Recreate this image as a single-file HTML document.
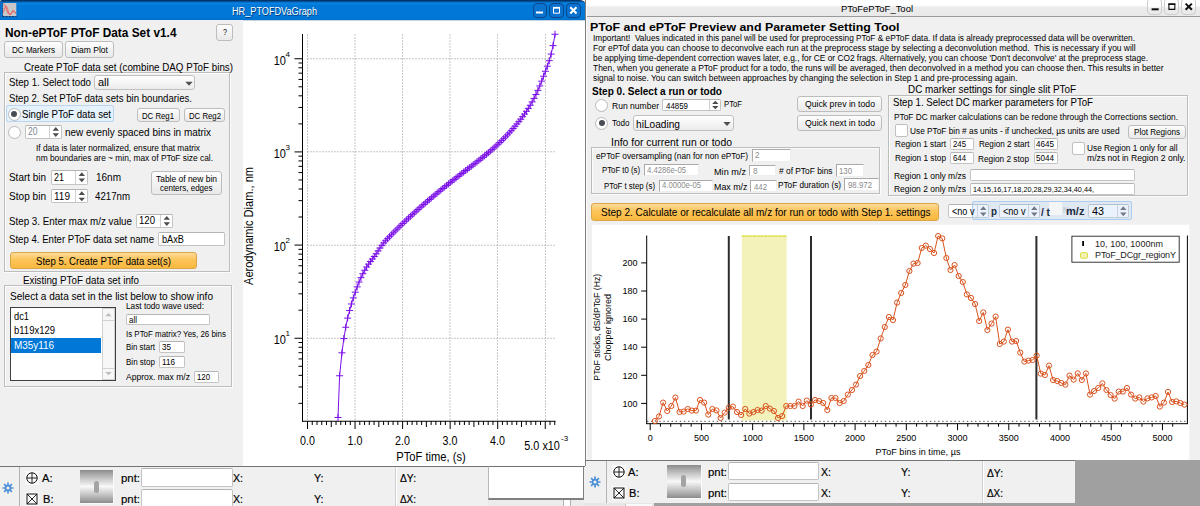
<!DOCTYPE html>
<html><head><meta charset="utf-8"><title>PToF</title><style>
html,body{margin:0;padding:0;background:#f0f0f0;}
body{width:1200px;height:506px;position:relative;overflow:hidden;font-family:"Liberation Sans",sans-serif;}
div,span.t,svg{position:absolute;}
span.t{white-space:pre;transform-origin:0 50%;display:block;}
</style></head>
<body>
<div style="left:0px;top:20px;width:240px;height:446px;background:#f0f0f0;"></div>
<div style="left:240px;top:20px;width:3px;height:446px;background:#f0f0f0;"></div>
<div style="left:243px;top:20px;width:342px;height:446px;background:#fff;"></div>
<div style="left:0px;top:0px;width:586px;height:20.3px;background:linear-gradient(#00417f 0,#0a84e6 2px,#0078d7 4.5px,#0078d7 16px,#0070cc 19px,#006ac2 20px);border-top:1px solid #00356c;border-radius:2px 6px 0 0;box-sizing:border-box;"></div>
<div style="left:0px;top:2px;width:1px;height:18px;background:#0a6cc8;"></div>
<svg style="left:2px;top:2px" width="16" height="16" viewBox="2 2 16 16"><rect x="2.9" y="3" width="13.4" height="13.2" fill="#c8c8c8"/><path d="M3.5 4 C5 4.6 5.6 6.5 6.5 9.5 S8.3 14.3 10 14.6 S12 11 12.9 10.6 S14.6 12.6 15.9 13.6" fill="none" stroke="#ee4a4a" stroke-width="0.9"/><path d="M3.4 12.5 C4.2 9 5 6.3 6.1 6.3 S8 10.2 8.8 12.5 S10.6 14.9 11.6 13 S12.9 10.8 13.6 11.1 S15 13.2 15.9 12.4" fill="none" stroke="#f05a5a" stroke-width="0.9"/><path d="M2.6 3 V16.4" stroke="#1a2a50" stroke-width="0.8" stroke-dasharray="1.2 1.2"/><path d="M2.4 16.6 H16.5" stroke="#102040" stroke-width="0.9" stroke-dasharray="2 1.2"/></svg>
<span class="t" style="transform:translateX(0.00px) scaleX(0.9140);left:231.8px;top:6px;font-size:10.01px;line-height:11px;color:#fff;text-shadow:0.7px 0.7px 0.5px rgba(0,30,80,0.7);">HR_PTOFDVaGraph</span>
<div style="left:532.5px;top:3px;width:14px;height:15px;border:1px solid #0a4a8c;border-radius:4px;background:#0c72cf;box-sizing:border-box;"></div>
<div style="left:549px;top:3px;width:14.5px;height:15px;border:1px solid #0a4a8c;border-radius:4px;background:#0c72cf;box-sizing:border-box;"></div>
<div style="left:566px;top:3px;width:14.5px;height:15px;border:1px solid #0a4a8c;border-radius:4px;background:#0c72cf;box-sizing:border-box;"></div>
<svg style="left:532px;top:3px" width="50" height="15"><path d="M4 9.5 H11" stroke="#fff" stroke-width="2"/><path d="M21 4.8 H28" stroke="#fff" stroke-width="1.8"/><path d="M21.5 5 V10.2 H27.5 V5" fill="none" stroke="#fff" stroke-width="1"/><path d="M38.3 4.3 L44.5 10.5 M44.5 4.3 L38.3 10.5" stroke="#fff" stroke-width="2"/></svg>
<span class="t" style="transform:translateX(0.00px) scaleX(0.9728);left:5.3px;top:26px;font-size:12.19px;line-height:14px;color:#000;font-weight:bold;">Non-ePToF PToF Data Set v1.4</span>
<div style="left:216px;top:24px;width:17px;height:17px;border:1px solid #bdbdbd;border-radius:3px;background:linear-gradient(#fdfdfd,#f3f3f3 50%,#e9e9e9);box-sizing:border-box;"></div>
<span class="t" style="transform:translateX(0.00px) scaleX(0.8797);left:222.5px;top:28px;font-size:8.19px;line-height:9px;color:#000;">?</span>
<div style="left:4px;top:41px;width:58.5px;height:16.5px;border:1px solid #bdbdbd;border-radius:3px;background:linear-gradient(#fdfdfd,#f3f3f3 50%,#e9e9e9);box-sizing:border-box;"></div>
<span class="t" style="transform:translateX(0.00px) scaleX(0.8613);left:11.75px;top:45px;font-size:9.37px;line-height:10px;color:#000;">DC Markers</span>
<div style="left:65px;top:41px;width:49px;height:16.5px;border:1px solid #bdbdbd;border-radius:3px;background:linear-gradient(#fdfdfd,#f3f3f3 50%,#e9e9e9);box-sizing:border-box;"></div>
<span class="t" style="transform:translateX(0.00px) scaleX(0.9118);left:71px;top:45px;font-size:9.37px;line-height:10px;color:#000;">Diam Plot</span>
<div style="left:4px;top:72px;width:226px;height:200px;border:1px solid #bdbdbd;box-sizing:border-box;box-shadow:inset 1px 1px 0 #fcfcfc, 1px 1px 0 #fcfcfc;"></div>
<span class="t" style="transform:translateX(0.00px) scaleX(0.9368);left:24px;top:62px;font-size:10.46px;line-height:11px;color:#000;">Create PToF data set (combine DAQ PToF bins)</span>
<span class="t" style="transform:translateX(0.00px) scaleX(0.9282);left:9px;top:77px;font-size:10.46px;line-height:11px;color:#000;">Step 1. Select todo</span>
<div style="left:94.3px;top:75px;width:101.2px;height:15.3px;border:1px solid #c0c0c0;border-radius:3px;background:linear-gradient(#ffffff,#f4f4f4 60%,#ebebeb);box-sizing:border-box;"></div>
<svg style="left:181.5px;top:75px" width="14" height="15.3"><path d="M3.3 6.85 L10.7 6.85 L7 10.85Z" fill="#505050"/></svg>
<span class="t" style="transform:translateX(0.00px) scaleX(1.0507);left:98px;top:77px;font-size:10.46px;line-height:11px;color:#000;">all</span>
<span class="t" style="transform:translateX(0.00px) scaleX(0.9208);left:9px;top:93px;font-size:10.46px;line-height:11px;color:#000;">Step 2. Set PToF data sets bin boundaries.</span>
<div style="left:6px;top:105.3px;width:107.5px;height:17px;border:1px solid #b8d6f3;background:#e5f1fb;box-sizing:border-box;border-radius:2px;"></div>
<div style="left:7.5px;top:107.5px;width:13px;height:13px;border:1px solid #bcbcbc;border-radius:50%;background:radial-gradient(circle at 50% 45%,#ffffff 55%,#ececec);box-sizing:border-box;"></div>
<div style="left:10.8px;top:110.8px;width:6.4px;height:6.4px;border-radius:50%;background:#474c55;"></div>
<span class="t" style="transform:translateX(0.00px) scaleX(0.9226);left:22px;top:109px;font-size:10.46px;line-height:11px;color:#000;">Single PToF data set</span>
<div style="left:137px;top:108.3px;width:42.5px;height:13.7px;border:1px solid #bdbdbd;border-radius:3px;background:linear-gradient(#fdfdfd,#f3f3f3 50%,#e9e9e9);box-sizing:border-box;"></div>
<span class="t" style="transform:translateX(0.00px) scaleX(0.8645);left:142.25px;top:111px;font-size:9.01px;line-height:10px;color:#000;">DC Reg1</span>
<div style="left:183.7px;top:108.3px;width:41.7px;height:13.7px;border:1px solid #bdbdbd;border-radius:3px;background:linear-gradient(#fdfdfd,#f3f3f3 50%,#e9e9e9);box-sizing:border-box;"></div>
<span class="t" style="transform:translateX(0.00px) scaleX(0.8645);left:188.55px;top:111px;font-size:9.01px;line-height:10px;color:#000;">DC Reg2</span>
<div style="left:7.5px;top:125.5px;width:13px;height:13px;border:1px solid #bcbcbc;border-radius:50%;background:radial-gradient(circle at 50% 45%,#ffffff 55%,#ececec);box-sizing:border-box;"></div>
<div style="left:24.5px;top:124.7px;width:37px;height:14px;border:1px solid #c4c4c4;border-top-color:#b4b4b4;border-radius:2px;background:#fff;box-sizing:border-box;"></div>
<div style="left:48.5px;top:125.7px;width:1px;height:12px;background:#d0d0d0;"></div>
<svg style="left:48.5px;top:124.7px" width="13" height="14"><path d="M3.6 5.7 L6.8 2 L10 5.7Z M3.6 8.3 L6.8 12 L10 8.3Z" fill="#4c4c4c"/></svg>
<span class="t" style="transform:translateX(0.00px) scaleX(0.8539);left:27.5px;top:126px;font-size:10.01px;line-height:11px;color:#7a8594;">20</span>
<span class="t" style="transform:translateX(0.00px) scaleX(0.9518);left:65px;top:127px;font-size:10.46px;line-height:11px;color:#000;">new evenly spaced bins in matrix</span>
<span class="t" style="transform:translateX(0.00px) scaleX(1.0171);left:36px;top:144px;font-size:8.19px;line-height:9px;color:#000;">If data is later normalized, ensure that matrix</span>
<span class="t" style="transform:translateX(0.00px) scaleX(1.0241);left:36px;top:154px;font-size:8.19px;line-height:9px;color:#000;">nm boundaries are ~ min, max of PToF size cal.</span>
<span class="t" style="transform:translateX(0.00px) scaleX(0.9502);left:9px;top:172px;font-size:10.46px;line-height:11px;color:#000;">Start bin</span>
<div style="left:50.5px;top:170px;width:37px;height:14.5px;border:1px solid #c4c4c4;border-top-color:#b4b4b4;border-radius:2px;background:#fff;box-sizing:border-box;"></div>
<div style="left:74.5px;top:171px;width:1px;height:12.5px;background:#d0d0d0;"></div>
<svg style="left:74.5px;top:170px" width="13" height="14.5"><path d="M3.6 5.95 L6.8 2.25 L10 5.95Z M3.6 8.55 L6.8 12.25 L10 8.55Z" fill="#4c4c4c"/></svg>
<span class="t" style="transform:translateX(0.00px) scaleX(0.8591);left:54px;top:172px;font-size:10.46px;line-height:11px;color:#000;">21</span>
<span class="t" style="transform:translateX(0.00px) scaleX(0.9558);left:96px;top:172px;font-size:10.46px;line-height:11px;color:#000;">16nm</span>
<span class="t" style="transform:translateX(0.00px) scaleX(0.9646);left:9px;top:191px;font-size:10.46px;line-height:11px;color:#000;">Stop bin</span>
<div style="left:50.5px;top:188.5px;width:37px;height:14.7px;border:1px solid #c4c4c4;border-top-color:#b4b4b4;border-radius:2px;background:#fff;box-sizing:border-box;"></div>
<div style="left:74.5px;top:189.5px;width:1px;height:12.7px;background:#d0d0d0;"></div>
<svg style="left:74.5px;top:188.5px" width="13" height="14.7"><path d="M3.6 6.05 L6.8 2.35 L10 6.05Z M3.6 8.65 L6.8 12.35 L10 8.65Z" fill="#4c4c4c"/></svg>
<span class="t" style="transform:translateX(0.00px) scaleX(0.9597);left:54px;top:191px;font-size:10.46px;line-height:11px;color:#000;">119</span>
<span class="t" style="transform:translateX(0.00px) scaleX(0.9264);left:95px;top:191px;font-size:10.46px;line-height:11px;color:#000;">4217nm</span>
<div style="left:150.5px;top:171px;width:71px;height:24px;border:1px solid #bdbdbd;border-radius:3px;background:linear-gradient(#fdfdfd,#f3f3f3 50%,#e9e9e9);box-sizing:border-box;"></div>
<span class="t" style="transform:translateX(0.00px) scaleX(0.9559);left:155.5px;top:174px;font-size:8.83px;line-height:10px;color:#000;">Table of new bin</span>
<span class="t" style="transform:translateX(0.00px) scaleX(0.9064);left:159.5px;top:183px;font-size:8.83px;line-height:10px;color:#000;">centers, edges</span>
<span class="t" style="transform:translateX(0.00px) scaleX(0.9367);left:9px;top:216px;font-size:10.46px;line-height:11px;color:#000;">Step 3. Enter max m/z value</span>
<div style="left:136.3px;top:213.6px;width:37px;height:14px;border:1px solid #c4c4c4;border-top-color:#b4b4b4;border-radius:2px;background:#fff;box-sizing:border-box;"></div>
<div style="left:160.3px;top:214.6px;width:1px;height:12px;background:#d0d0d0;"></div>
<svg style="left:160.3px;top:213.6px" width="13" height="14"><path d="M3.6 5.7 L6.8 2 L10 5.7Z M3.6 8.3 L6.8 12 L10 8.3Z" fill="#4c4c4c"/></svg>
<span class="t" style="transform:translateX(0.00px) scaleX(0.9167);left:139px;top:215px;font-size:10.46px;line-height:11px;color:#000;">120</span>
<span class="t" style="transform:translateX(0.00px) scaleX(0.9208);left:9px;top:234px;font-size:10.46px;line-height:11px;color:#000;">Step 4. Enter PToF data set name</span>
<div style="left:158.3px;top:232.3px;width:66.7px;height:13.7px;border:1px solid #c4c4c4;border-top-color:#b4b4b4;border-radius:2px;background:#fff;box-sizing:border-box;"></div>
<span class="t" style="transform:translateX(0.00px) scaleX(0.8800);left:161.5px;top:234px;font-size:10.46px;line-height:11px;color:#000;">bAxB</span>
<div style="left:10px;top:252.4px;width:187px;height:17px;border:1px solid #d9a648;border-radius:3px;background:linear-gradient(#fddb9a,#fcc458 45%,#f9b840);box-sizing:border-box;"></div>
<span class="t" style="transform:translateX(0.00px) scaleX(0.9184);left:36px;top:256px;font-size:10.46px;line-height:11px;color:#000;">Step 5. Create PToF data set(s)</span>
<div style="left:4px;top:285px;width:228px;height:101.5px;border:1px solid #bdbdbd;box-sizing:border-box;box-shadow:inset 1px 1px 0 #fcfcfc, 1px 1px 0 #fcfcfc;"></div>
<span class="t" style="transform:translateX(0.00px) scaleX(0.9373);left:23px;top:275px;font-size:10.46px;line-height:11px;color:#000;">Existing PToF data set info</span>
<span class="t" style="transform:translateX(0.00px) scaleX(0.9624);left:10px;top:291px;font-size:10.46px;line-height:11px;color:#000;">Select a data set in the list below to show info</span>
<div style="left:10px;top:307px;width:106px;height:74px;border:1px solid #404040;background:#fff;box-sizing:border-box;"></div>
<div style="left:11px;top:337.8px;width:90px;height:14.8px;background:#0078d7;"></div>
<span class="t" style="transform:translateX(0.00px) scaleX(0.8897);left:13.5px;top:311px;font-size:10.46px;line-height:11px;color:#000;">dc1</span>
<span class="t" style="transform:translateX(0.00px) scaleX(0.9080);left:13.5px;top:325px;font-size:10.46px;line-height:11px;color:#000;">b119x129</span>
<span class="t" style="transform:translateX(0.00px) scaleX(0.9471);left:13.5px;top:340px;font-size:10.46px;line-height:11px;color:#fff;">M35y116</span>
<div style="left:102px;top:308px;width:13px;height:72px;background:#f7f7f7;border:1px solid #d2d2d2;box-sizing:border-box;"></div>
<div style="left:102px;top:320px;width:13px;height:1px;background:#d2d2d2;"></div>
<div style="left:102px;top:367.5px;width:13px;height:1px;background:#d2d2d2;"></div>
<svg style="left:101px;top:308px" width="14" height="72"><path d="M4.2 8.3 L7.5 5 L10.8 8.3Z M4.2 64 L7.5 67.3 L10.8 64Z" fill="#bdbdbd"/></svg>
<span class="t" style="transform:translateX(0.00px) scaleX(1.0099);left:126px;top:302px;font-size:8.19px;line-height:9px;color:#000;">Last todo wave used:</span>
<div style="left:125.5px;top:313.5px;width:84.5px;height:11.5px;border:1px solid #c4c4c4;border-top-color:#b4b4b4;border-radius:2px;background:#fff;box-sizing:border-box;"></div>
<span class="t" style="transform:translateX(0.00px) scaleX(0.9771);left:129px;top:316px;font-size:8.19px;line-height:9px;color:#000;">all</span>
<span class="t" style="transform:translateX(0.00px) scaleX(0.9698);left:126px;top:330px;font-size:8.19px;line-height:9px;color:#000;">Is PToF matrix? Yes, 26 bins</span>
<span class="t" style="transform:translateX(0.00px) scaleX(0.9672);left:126px;top:343px;font-size:8.19px;line-height:9px;color:#000;">Bin start</span>
<div style="left:159px;top:340.5px;width:25.5px;height:12px;border:1px solid #c4c4c4;border-top-color:#b4b4b4;border-radius:2px;background:#fff;box-sizing:border-box;"></div>
<span class="t" style="transform:translateX(0.00px) scaleX(0.9897);left:162px;top:343px;font-size:8.19px;line-height:9px;color:#000;">35</span>
<span class="t" style="transform:translateX(0.00px) scaleX(0.9820);left:126px;top:358px;font-size:8.19px;line-height:9px;color:#000;">Bin stop</span>
<div style="left:159px;top:355.5px;width:25.5px;height:12px;border:1px solid #c4c4c4;border-top-color:#b4b4b4;border-radius:2px;background:#fff;box-sizing:border-box;"></div>
<span class="t" style="transform:translateX(0.00px) scaleX(0.9976);left:162px;top:358px;font-size:8.19px;line-height:9px;color:#000;">116</span>
<span class="t" style="transform:translateX(0.00px) scaleX(1.0438);left:126px;top:373px;font-size:8.19px;line-height:9px;color:#000;">Approx. max m/z</span>
<div style="left:194.2px;top:370.7px;width:24.8px;height:12px;border:1px solid #c4c4c4;border-top-color:#b4b4b4;border-radius:2px;background:#fff;box-sizing:border-box;"></div>
<span class="t" style="transform:translateX(0.00px) scaleX(0.9530);left:197px;top:373px;font-size:8.19px;line-height:9px;color:#000;">120</span>
<svg style="left:243px;top:20px" width="342" height="446" viewBox="243 20 342 446" font-family="Liberation Sans, sans-serif"><path d="M307.5 34.5 V421 M355 34.5 V421 M402.5 34.5 V421 M450 34.5 V421 M497.5 34.5 V421 M545.5 34.5 V421 M307.5 58.75 H555 M307.5 151.75 H555 M307.5 245.25 H555 M307.5 338.25 H555" stroke="#909090" stroke-width="1" stroke-dasharray="1 2" fill="none"/><path d="M302.5 34 V421.75 M302 421.25 H555.5 M307.50 421 V429 M312.25 421 V425 M317.01 421 V425 M321.76 421 V425 M326.52 421 V425 M331.27 421 V427 M336.03 421 V425 M340.78 421 V425 M345.54 421 V425 M350.30 421 V425 M355.05 421 V429 M359.81 421 V425 M364.56 421 V425 M369.31 421 V425 M374.07 421 V425 M378.82 421 V427 M383.58 421 V425 M388.33 421 V425 M393.09 421 V425 M397.85 421 V425 M402.60 421 V429 M407.36 421 V425 M412.11 421 V425 M416.87 421 V425 M421.62 421 V425 M426.38 421 V427 M431.13 421 V425 M435.88 421 V425 M440.64 421 V425 M445.39 421 V425 M450.15 421 V429 M454.90 421 V425 M459.66 421 V425 M464.41 421 V425 M469.17 421 V425 M473.92 421 V427 M478.68 421 V425 M483.44 421 V425 M488.19 421 V425 M492.94 421 V425 M497.70 421 V429 M502.45 421 V425 M507.21 421 V425 M511.97 421 V425 M516.72 421 V425 M521.48 421 V427 M526.23 421 V425 M530.99 421 V425 M535.74 421 V425 M540.50 421 V425 M545.25 421 V429 M550.00 421 V425 M554.76 421 V425 M298.5 403.37 H302.5 M298.5 386.97 H302.5 M298.5 375.33 H302.5 M298.5 366.30 H302.5 M298.5 358.92 H302.5 M298.5 352.68 H302.5 M298.5 347.28 H302.5 M298.5 342.51 H302.5 M294.5 338.25 H302.5 M298.5 310.20 H302.5 M298.5 293.80 H302.5 M298.5 282.16 H302.5 M298.5 273.13 H302.5 M298.5 265.75 H302.5 M298.5 259.51 H302.5 M298.5 254.11 H302.5 M298.5 249.34 H302.5 M294.5 245.08 H302.5 M298.5 217.03 H302.5 M298.5 200.63 H302.5 M298.5 188.99 H302.5 M298.5 179.96 H302.5 M298.5 172.58 H302.5 M298.5 166.34 H302.5 M298.5 160.94 H302.5 M298.5 156.17 H302.5 M294.5 151.91 H302.5 M298.5 123.86 H302.5 M298.5 107.46 H302.5 M298.5 95.82 H302.5 M298.5 86.79 H302.5 M298.5 79.41 H302.5 M298.5 73.17 H302.5 M298.5 67.77 H302.5 M298.5 63.00 H302.5 M294.5 58.74 H302.5" stroke="#000" stroke-width="1" fill="none"/><path d="M338.00 417.50 L339.60 375.75 L341.94 352.82 L343.84 338.61 L345.74 327.25 L347.65 318.11 L349.55 310.56 L351.45 303.97 L353.35 297.86 L355.25 292.16 L357.16 286.89 L359.06 282.05 L360.96 277.67 L362.86 273.74 L364.76 270.21 L366.67 267.03 L368.57 264.14 L370.47 261.47 L372.37 258.96 L374.27 256.51 L376.18 253.82 L378.08 250.90 L379.98 248.00 L381.88 245.35 L383.78 242.95 L385.69 240.74 L387.59 238.68 L389.49 236.70 L391.39 234.76 L393.29 232.83 L395.20 230.93 L397.10 229.05 L399.00 227.18 L400.90 225.34 L402.80 223.51 L404.71 221.69 L406.61 219.90 L408.51 218.12 L410.41 216.36 L412.31 214.61 L414.22 212.88 L416.12 211.17 L418.02 209.46 L419.92 207.78 L421.82 206.10 L423.73 204.44 L425.63 202.80 L427.53 201.16 L429.43 199.54 L431.33 197.93 L433.24 196.34 L435.14 194.75 L437.04 193.18 L438.94 191.61 L440.84 190.06 L442.75 188.51 L444.65 186.98 L446.55 185.45 L448.45 183.93 L450.35 182.42 L452.26 180.92 L454.16 179.43 L456.06 177.94 L457.96 176.46 L459.86 174.99 L461.77 173.52 L463.67 172.06 L465.57 170.60 L467.47 169.15 L469.37 167.70 L471.28 166.25 L473.18 164.79 L475.08 163.33 L476.98 161.86 L478.88 160.37 L480.79 158.87 L482.69 157.36 L484.59 155.82 L486.49 154.26 L488.39 152.68 L490.30 151.06 L492.20 149.42 L494.10 147.74 L496.00 146.03 L497.90 144.27 L499.81 142.48 L501.71 140.64 L503.61 138.75 L505.51 136.82 L507.41 134.83 L509.32 132.78 L511.22 130.68 L513.12 128.51 L515.02 126.29 L516.92 123.99 L518.83 121.63 L520.73 119.20 L522.63 116.68 L524.53 114.05 L526.43 111.29 L528.34 108.36 L530.24 105.25 L532.14 101.92 L534.04 98.35 L535.94 94.52 L537.85 90.39 L539.75 85.94 L541.65 81.15 L543.55 76.21 L545.45 71.29 L547.36 66.21 L549.26 60.69 L551.16 54.08 L553.06 45.61 L555.00 34.25" stroke="#7a10e8" stroke-width="1" fill="none"/><path d="M334.50 417.50 h7 M338.00 414.00 v7 M336.10 375.75 h7 M339.60 372.25 v7 M338.44 352.82 h7 M341.94 349.32 v7 M340.34 338.61 h7 M343.84 335.11 v7 M342.24 327.25 h7 M345.74 323.75 v7 M344.15 318.11 h7 M347.65 314.61 v7 M346.05 310.56 h7 M349.55 307.06 v7 M347.95 303.97 h7 M351.45 300.47 v7 M349.85 297.86 h7 M353.35 294.36 v7 M351.75 292.16 h7 M355.25 288.66 v7 M353.66 286.89 h7 M357.16 283.39 v7 M355.56 282.05 h7 M359.06 278.55 v7 M357.46 277.67 h7 M360.96 274.17 v7 M359.36 273.74 h7 M362.86 270.24 v7 M361.26 270.21 h7 M364.76 266.71 v7 M363.17 267.03 h7 M366.67 263.53 v7 M365.07 264.14 h7 M368.57 260.64 v7 M366.97 261.47 h7 M370.47 257.97 v7 M368.87 258.96 h7 M372.37 255.46 v7 M370.77 256.51 h7 M374.27 253.01 v7 M372.68 253.82 h7 M376.18 250.32 v7 M374.58 250.90 h7 M378.08 247.40 v7 M376.48 248.00 h7 M379.98 244.50 v7 M378.38 245.35 h7 M381.88 241.85 v7 M380.28 242.95 h7 M383.78 239.45 v7 M382.19 240.74 h7 M385.69 237.24 v7 M384.09 238.68 h7 M387.59 235.18 v7 M385.99 236.70 h7 M389.49 233.20 v7 M387.89 234.76 h7 M391.39 231.26 v7 M389.79 232.83 h7 M393.29 229.33 v7 M391.70 230.93 h7 M395.20 227.43 v7 M393.60 229.05 h7 M397.10 225.55 v7 M395.50 227.18 h7 M399.00 223.68 v7 M397.40 225.34 h7 M400.90 221.84 v7 M399.30 223.51 h7 M402.80 220.01 v7 M401.21 221.69 h7 M404.71 218.19 v7 M403.11 219.90 h7 M406.61 216.40 v7 M405.01 218.12 h7 M408.51 214.62 v7 M406.91 216.36 h7 M410.41 212.86 v7 M408.81 214.61 h7 M412.31 211.11 v7 M410.72 212.88 h7 M414.22 209.38 v7 M412.62 211.17 h7 M416.12 207.67 v7 M414.52 209.46 h7 M418.02 205.96 v7 M416.42 207.78 h7 M419.92 204.28 v7 M418.32 206.10 h7 M421.82 202.60 v7 M420.23 204.44 h7 M423.73 200.94 v7 M422.13 202.80 h7 M425.63 199.30 v7 M424.03 201.16 h7 M427.53 197.66 v7 M425.93 199.54 h7 M429.43 196.04 v7 M427.83 197.93 h7 M431.33 194.43 v7 M429.74 196.34 h7 M433.24 192.84 v7 M431.64 194.75 h7 M435.14 191.25 v7 M433.54 193.18 h7 M437.04 189.68 v7 M435.44 191.61 h7 M438.94 188.11 v7 M437.34 190.06 h7 M440.84 186.56 v7 M439.25 188.51 h7 M442.75 185.01 v7 M441.15 186.98 h7 M444.65 183.48 v7 M443.05 185.45 h7 M446.55 181.95 v7 M444.95 183.93 h7 M448.45 180.43 v7 M446.85 182.42 h7 M450.35 178.92 v7 M448.76 180.92 h7 M452.26 177.42 v7 M450.66 179.43 h7 M454.16 175.93 v7 M452.56 177.94 h7 M456.06 174.44 v7 M454.46 176.46 h7 M457.96 172.96 v7 M456.36 174.99 h7 M459.86 171.49 v7 M458.27 173.52 h7 M461.77 170.02 v7 M460.17 172.06 h7 M463.67 168.56 v7 M462.07 170.60 h7 M465.57 167.10 v7 M463.97 169.15 h7 M467.47 165.65 v7 M465.87 167.70 h7 M469.37 164.20 v7 M467.78 166.25 h7 M471.28 162.75 v7 M469.68 164.79 h7 M473.18 161.29 v7 M471.58 163.33 h7 M475.08 159.83 v7 M473.48 161.86 h7 M476.98 158.36 v7 M475.38 160.37 h7 M478.88 156.87 v7 M477.29 158.87 h7 M480.79 155.37 v7 M479.19 157.36 h7 M482.69 153.86 v7 M481.09 155.82 h7 M484.59 152.32 v7 M482.99 154.26 h7 M486.49 150.76 v7 M484.89 152.68 h7 M488.39 149.18 v7 M486.80 151.06 h7 M490.30 147.56 v7 M488.70 149.42 h7 M492.20 145.92 v7 M490.60 147.74 h7 M494.10 144.24 v7 M492.50 146.03 h7 M496.00 142.53 v7 M494.40 144.27 h7 M497.90 140.77 v7 M496.31 142.48 h7 M499.81 138.98 v7 M498.21 140.64 h7 M501.71 137.14 v7 M500.11 138.75 h7 M503.61 135.25 v7 M502.01 136.82 h7 M505.51 133.32 v7 M503.91 134.83 h7 M507.41 131.33 v7 M505.82 132.78 h7 M509.32 129.28 v7 M507.72 130.68 h7 M511.22 127.18 v7 M509.62 128.51 h7 M513.12 125.01 v7 M511.52 126.29 h7 M515.02 122.79 v7 M513.42 123.99 h7 M516.92 120.49 v7 M515.33 121.63 h7 M518.83 118.13 v7 M517.23 119.20 h7 M520.73 115.70 v7 M519.13 116.68 h7 M522.63 113.18 v7 M521.03 114.05 h7 M524.53 110.55 v7 M522.93 111.29 h7 M526.43 107.79 v7 M524.84 108.36 h7 M528.34 104.86 v7 M526.74 105.25 h7 M530.24 101.75 v7 M528.64 101.92 h7 M532.14 98.42 v7 M530.54 98.35 h7 M534.04 94.85 v7 M532.44 94.52 h7 M535.94 91.02 v7 M534.35 90.39 h7 M537.85 86.89 v7 M536.25 85.94 h7 M539.75 82.44 v7 M538.15 81.15 h7 M541.65 77.65 v7 M540.05 76.21 h7 M543.55 72.71 v7 M541.95 71.29 h7 M545.45 67.79 v7 M543.86 66.21 h7 M547.36 62.71 v7 M545.76 60.69 h7 M549.26 57.19 v7 M547.66 54.08 h7 M551.16 50.58 v7 M549.56 45.61 h7 M553.06 42.11 v7 M551.50 34.25 h7 M555.00 30.75 v7" stroke="#7a10e8" stroke-width="1" fill="none"/><text x="307.5" y="444.6" font-size="12" text-anchor="middle" textLength="14.9" lengthAdjust="spacingAndGlyphs">0.0</text><text x="355" y="444.6" font-size="12" text-anchor="middle" textLength="14.9" lengthAdjust="spacingAndGlyphs">1.0</text><text x="402.5" y="444.6" font-size="12" text-anchor="middle" textLength="14.9" lengthAdjust="spacingAndGlyphs">2.0</text><text x="450" y="444.6" font-size="12" text-anchor="middle" textLength="14.9" lengthAdjust="spacingAndGlyphs">3.0</text><text x="497.5" y="444.6" font-size="12" text-anchor="middle" textLength="14.9" lengthAdjust="spacingAndGlyphs">4.0</text><text x="524.3" y="449.6" font-size="12" textLength="35.6" lengthAdjust="spacingAndGlyphs">5.0 x10</text><text x="561" y="440.6" font-size="8">-3</text><text x="396.3" y="461" font-size="12" textLength="69.5" lengthAdjust="spacingAndGlyphs">PToF time, (s)</text><text x="273.7" y="64.85" font-size="12" textLength="12.2" lengthAdjust="spacingAndGlyphs">10</text><text x="285.5" y="56.55" font-size="8">4</text><text x="273.7" y="157.85" font-size="12" textLength="12.2" lengthAdjust="spacingAndGlyphs">10</text><text x="285.5" y="149.55" font-size="8">3</text><text x="273.7" y="251.35" font-size="12" textLength="12.2" lengthAdjust="spacingAndGlyphs">10</text><text x="285.5" y="243.05" font-size="8">2</text><text x="273.7" y="344.35" font-size="12" textLength="12.2" lengthAdjust="spacingAndGlyphs">10</text><text x="285.5" y="336.05" font-size="8">1</text><text transform="translate(252.8 285) rotate(-90)" font-size="12" textLength="118" lengthAdjust="spacingAndGlyphs">Aerodynamic Diam., nm</text></svg>
<div style="left:0px;top:465.5px;width:585px;height:40.5px;background:#f0f0f0;border-top:1px solid #747474;box-sizing:border-box;"></div>
<svg style="left:2.2px;top:481.7px" width="12" height="12" viewBox="-6 -6 12 12"><g stroke="#4a8fd6" stroke-width="1.7"><path d="M0 -5.5 V5.5 M-5.5 0 H5.5 M-3.9 -3.9 L3.9 3.9 M-3.9 3.9 L3.9 -3.9"/></g><circle r="3.2" fill="#4a8fd6"/><circle r="1.6" fill="#f0f0f0"/></svg>
<div style="left:19px;top:466.5px;width:1px;height:39.5px;background:#b4b4b4;"></div>
<svg style="left:24.5px;top:470.5px" width="14" height="14"><rect width="14" height="14" fill="#fafafa"/><circle cx="7" cy="7" r="5.2" fill="none" stroke="#111" stroke-width="1"/><path d="M7 1.8 V12.2 M1.8 7 H12.2" stroke="#111" stroke-width="0.9"/></svg>
<svg style="left:24.5px;top:491.5px" width="14" height="14"><rect width="14" height="14" fill="#fafafa"/><rect x="2" y="2" width="10" height="10" fill="none" stroke="#111" stroke-width="1"/><path d="M2 2 L12 12 M12 2 L2 12" stroke="#111" stroke-width="0.9"/></svg>
<span class="t" style="transform:translateX(0.00px) scaleX(1.0718);left:42px;top:473px;font-size:10.37px;line-height:11px;color:#000;-webkit-text-stroke:0.18px #000;">A:</span>
<span class="t" style="transform:translateX(0.00px) scaleX(1.0718);left:42.5px;top:494px;font-size:10.37px;line-height:11px;color:#000;-webkit-text-stroke:0.18px #000;">B:</span>
<div style="left:79.8px;top:470.2px;width:33.5px;height:33px;background:linear-gradient(#8c8c8c,#c4c4c4 25%,#f8f8f8 50%,#c4c4c4 75%,#8c8c8c);box-shadow:1px 1px 0 #fafafa;"></div>
<div style="left:94.1px;top:480.8px;width:5px;height:12px;background:#a4a4a4;border-radius:2.5px;"></div>
<span class="t" style="transform:translateX(0.00px) scaleX(1.0995);left:121px;top:473px;font-size:10.37px;line-height:11px;color:#000;-webkit-text-stroke:0.15px #000;">pnt:</span>
<span class="t" style="transform:translateX(0.00px) scaleX(1.0995);left:121px;top:494px;font-size:10.37px;line-height:11px;color:#000;-webkit-text-stroke:0.15px #000;">pnt:</span>
<div style="left:141px;top:468px;width:92px;height:18.5px;border:1px solid #c4c4c4;border-top-color:#b4b4b4;border-radius:2px;background:#fff;box-sizing:border-box;"></div>
<div style="left:141px;top:489px;width:92px;height:18.5px;border:1px solid #c4c4c4;border-top-color:#b4b4b4;border-radius:2px;background:#fff;box-sizing:border-box;"></div>
<span class="t" style="transform:translateX(0.00px) scaleX(1.0207);left:233px;top:473px;font-size:10.37px;line-height:11px;color:#000;-webkit-text-stroke:0.18px #000;">X:</span>
<span class="t" style="transform:translateX(0.00px) scaleX(1.0305);left:313.5px;top:473px;font-size:10.37px;line-height:11px;color:#000;-webkit-text-stroke:0.18px #000;">Y:</span>
<span class="t" style="transform:translateX(0.00px) scaleX(1.0207);left:233px;top:494px;font-size:10.37px;line-height:11px;color:#000;-webkit-text-stroke:0.18px #000;">X:</span>
<span class="t" style="transform:translateX(0.00px) scaleX(1.0305);left:313.5px;top:494px;font-size:10.37px;line-height:11px;color:#000;-webkit-text-stroke:0.18px #000;">Y:</span>
<div style="left:395px;top:466.5px;width:1px;height:39.5px;background:#d0d0d0;"></div>
<div style="left:396px;top:466.5px;width:1px;height:39.5px;background:#fff;"></div>
<span class="t" style="transform:translateX(0.00px) scaleX(0.9913);left:399.5px;top:473px;font-size:10.37px;line-height:11px;color:#000;-webkit-text-stroke:0.18px #000;">ΔY:</span>
<span class="t" style="transform:translateX(0.00px) scaleX(0.9570);left:399.5px;top:494px;font-size:10.37px;line-height:11px;color:#000;-webkit-text-stroke:0.18px #000;">ΔX:</span>
<div style="left:488px;top:465.5px;width:96.3px;height:34px;background:#fff;border-top:1px solid #707070;border-bottom:2px solid #808080;border-left:1px solid #b8b8b8;border-right:1px solid #808080;box-sizing:border-box;"></div>
<div style="left:488px;top:499.5px;width:96px;height:7px;background:#ececec;"></div>
<div style="left:562.5px;top:499.5px;width:8px;height:7px;background:#fff;border-left:1px solid #b0b0b0;border-right:1px solid #b0b0b0;box-sizing:border-box;"></div>
<div style="left:243px;top:20px;width:342px;height:1px;background:#c4d6e6;"></div>
<div style="left:585px;top:0px;width:615px;height:506px;background:#f0f0f0;"></div>
<div style="left:585px;top:0px;width:615px;height:17px;background:linear-gradient(#ffffff 0,#ffffff 5px,#ebebeb 7.5px,#e9e9e9 100%);border-bottom:1px solid #9a9a9a;box-sizing:border-box;"></div>
<div style="left:585px;top:0px;width:1px;height:466px;background:#808080;"></div>
<div style="left:586px;top:0px;width:1px;height:460px;background:#fbfbfb;"></div>
<span class="t" style="transform:translateX(0.00px) scaleX(0.9903);left:841px;top:3px;font-size:9.55px;line-height:11px;color:#000;">PToFePToF_Tool</span>
<div style="left:1147.3px;top:-2px;width:15px;height:16.6px;border:1px solid #cdcdcd;border-radius:4px;background:linear-gradient(#fff 0,#fff 7px,#ececec 9.5px,#e9e9e9 100%);box-sizing:border-box;"></div>
<div style="left:1164.3px;top:-2px;width:15px;height:16.6px;border:1px solid #cdcdcd;border-radius:4px;background:linear-gradient(#fff 0,#fff 7px,#ececec 9.5px,#e9e9e9 100%);box-sizing:border-box;"></div>
<div style="left:1181.3px;top:-2px;width:15px;height:16.6px;border:1px solid #cdcdcd;border-radius:4px;background:linear-gradient(#fff 0,#fff 7px,#ececec 9.5px,#e9e9e9 100%);box-sizing:border-box;"></div>
<svg style="left:1147px;top:0px" width="53" height="16" viewBox="1147 0 53 16"><path d="M1151.6 9.3 H1158.7" stroke="#111" stroke-width="2"/><path d="M1168.3 4.1 H1175.4" stroke="#111" stroke-width="1.8"/><path d="M1168.9 4 V9.4 H1174.8 V4" fill="none" stroke="#111" stroke-width="1.1"/><path d="M1185.6 3.6 L1191.9 9.8 M1191.9 3.6 L1185.6 9.8" stroke="#111" stroke-width="2"/></svg>
<span class="t" style="transform:translateX(0.00px) scaleX(1.1349);left:590.3px;top:21px;font-size:10.92px;line-height:12px;color:#000;font-weight:bold;">PToF and ePToF Preview and Parameter Setting Tool</span>
<span class="t" style="transform:translateX(0.00px) scaleX(1.0149);left:592.5px;top:34px;font-size:8.19px;line-height:9px;color:#000;">Important!  Values indicated in this panel will be used for preprocessing PToF &amp; ePToF data. If data is already preprocessed data will be overwritten.</span>
<span class="t" style="transform:translateX(0.00px) scaleX(1.0290);left:592.5px;top:44px;font-size:8.19px;line-height:9px;color:#000;">For ePTof data you can choose to deconvolve each run at the preprocess stage by selecting a deconvolution method.  This is necessary if you will</span>
<span class="t" style="transform:translateX(0.00px) scaleX(1.0190);left:592.5px;top:54px;font-size:8.19px;line-height:9px;color:#000;">be applying time-dependent correction waves later, e.g., for CE or CO2 frags. Alternatively, you can choose 'Don't deconvolve' at the preprocess stage.</span>
<span class="t" style="transform:translateX(0.00px) scaleX(1.0339);left:592.5px;top:64px;font-size:8.19px;line-height:9px;color:#000;">Then, when you generate a PToF product for a todo, the runs will be averaged, then deconvolved in a method you can choose then. This results in better</span>
<span class="t" style="transform:translateX(0.00px) scaleX(1.0234);left:592.5px;top:74px;font-size:8.19px;line-height:9px;color:#000;">signal to noise. You can switch between approaches by changing the selection in Step 1 and pre-processing again.</span>
<span class="t" style="transform:translateX(0.00px) scaleX(0.9207);left:591.5px;top:85px;font-size:10.92px;line-height:12px;color:#000;font-weight:bold;">Step 0. Select a run or todo</span>
<div style="left:595.3px;top:98.8px;width:13px;height:13px;border:1px solid #bcbcbc;border-radius:50%;background:radial-gradient(circle at 50% 45%,#ffffff 55%,#ececec);box-sizing:border-box;"></div>
<span class="t" style="transform:translateX(0.00px) scaleX(0.9391);left:612px;top:101px;font-size:9.1px;line-height:10px;color:#000;">Run number</span>
<div style="left:662.3px;top:98.6px;width:59px;height:12px;border:1px solid #c4c4c4;border-top-color:#b4b4b4;border-radius:2px;background:#fff;box-sizing:border-box;"></div>
<div style="left:709.3px;top:99.6px;width:1px;height:10px;background:#d0d0d0;"></div>
<svg style="left:709.3px;top:98.6px" width="12" height="12"><path d="M3.1 5.1 L6.3 1.8 L9.5 5.1Z M3.1 6.9 L6.3 10.2 L9.5 6.9Z" fill="#4c4c4c"/></svg>
<span class="t" style="transform:translateX(0.00px) scaleX(0.9677);left:666px;top:102px;font-size:8.19px;line-height:9px;color:#000;">44859</span>
<span class="t" style="transform:translateX(0.00px) scaleX(0.8477);left:723.5px;top:99px;font-size:9.1px;line-height:10px;color:#000;">PToF</span>
<div style="left:797px;top:96.3px;width:85px;height:16.2px;border:1px solid #bdbdbd;border-radius:3px;background:linear-gradient(#fdfdfd,#f3f3f3 50%,#e9e9e9);box-sizing:border-box;"></div>
<span class="t" style="transform:translateX(0.00px) scaleX(0.9550);left:804.5px;top:99px;font-size:9.1px;line-height:10px;color:#000;">Quick prev in todo</span>
<div style="left:797px;top:115px;width:85px;height:16.3px;border:1px solid #bdbdbd;border-radius:3px;background:linear-gradient(#fdfdfd,#f3f3f3 50%,#e9e9e9);box-sizing:border-box;"></div>
<span class="t" style="transform:translateX(0.00px) scaleX(0.9616);left:804.5px;top:118px;font-size:9.1px;line-height:10px;color:#000;">Quick next in todo</span>
<div style="left:595.3px;top:116.5px;width:13px;height:13px;border:1px solid #bcbcbc;border-radius:50%;background:radial-gradient(circle at 50% 45%,#ffffff 55%,#ececec);box-sizing:border-box;"></div>
<div style="left:598.6px;top:119.8px;width:6.4px;height:6.4px;border-radius:50%;background:#474c55;"></div>
<span class="t" style="transform:translateX(0.00px) scaleX(0.8875);left:612px;top:118px;font-size:9.1px;line-height:10px;color:#000;">Todo</span>
<div style="left:632.5px;top:115.2px;width:101.5px;height:15.8px;border:1px solid #c0c0c0;border-radius:3px;background:linear-gradient(#ffffff,#f4f4f4 60%,#ebebeb);box-sizing:border-box;"></div>
<svg style="left:720px;top:115.2px" width="14" height="15.8"><path d="M3.3 7.1 L10.7 7.1 L7 11.1Z" fill="#505050"/></svg>
<span class="t" style="transform:translateX(0.00px) scaleX(0.9300);left:636px;top:118px;font-size:10.92px;line-height:12px;color:#000;">hiLoading</span>
<div style="left:591px;top:147px;width:289px;height:47px;border:1px solid #bdbdbd;box-sizing:border-box;box-shadow:inset 1px 1px 0 #fcfcfc, 1px 1px 0 #fcfcfc;"></div>
<span class="t" style="transform:translateX(0.00px) scaleX(0.9964);left:610.5px;top:137px;font-size:10.46px;line-height:11px;color:#000;">Info for current run or todo</span>
<span class="t" style="transform:translateX(0.00px) scaleX(1.0171);left:596px;top:152px;font-size:8.19px;line-height:9px;color:#000;">ePToF oversampling (nan for non ePToF)</span>
<div style="left:751.5px;top:148.5px;width:39.5px;height:13px;border:1px solid #c4c4c4;border-top-color:#b4b4b4;border-radius:2px;background:#fff;box-sizing:border-box;border-color:#aaa #eee #eee #aaa;border-radius:0;"></div>
<span class="t" style="transform:translateX(0.00px) scaleX(0.9897);left:755px;top:151px;font-size:8.19px;line-height:9px;color:#8a8a8a;">2</span>
<span class="t" style="transform:translateX(0.00px) scaleX(0.9507);left:602px;top:166px;font-size:8.19px;line-height:9px;color:#000;">PToF t0 (s)</span>
<div style="left:644px;top:164px;width:54.5px;height:11.5px;border:1px solid #c4c4c4;border-top-color:#b4b4b4;border-radius:2px;background:#fff;box-sizing:border-box;border-color:#aaa #eee #eee #aaa;border-radius:0;"></div>
<span class="t" style="transform:translateX(0.00px) scaleX(0.9430);left:647px;top:166px;font-size:8.19px;line-height:9px;color:#8a8a8a;">4.4286e-05</span>
<span class="t" style="transform:translateX(0.00px) scaleX(1.0600);left:713.5px;top:167px;font-size:8.64px;line-height:10px;color:#000;">Min m/z</span>
<div style="left:749px;top:164.5px;width:27.3px;height:11.8px;border:1px solid #c4c4c4;border-top-color:#b4b4b4;border-radius:2px;background:#fff;box-sizing:border-box;border-color:#aaa #eee #eee #aaa;border-radius:0;"></div>
<span class="t" style="transform:translateX(0.00px) scaleX(0.9897);left:752.5px;top:167px;font-size:8.19px;line-height:9px;color:#8a8a8a;">8</span>
<span class="t" style="transform:translateX(0.00px) scaleX(1.0239);left:779px;top:167px;font-size:8.19px;line-height:9px;color:#000;"># of PToF bins</span>
<div style="left:836px;top:164px;width:27.7px;height:12.5px;border:1px solid #c4c4c4;border-top-color:#b4b4b4;border-radius:2px;background:#fff;box-sizing:border-box;border-color:#aaa #eee #eee #aaa;border-radius:0;"></div>
<span class="t" style="transform:translateX(0.00px) scaleX(0.9530);left:839px;top:167px;font-size:8.19px;line-height:9px;color:#8a8a8a;">130</span>
<span class="t" style="transform:translateX(0.00px) scaleX(0.9597);left:603.5px;top:182px;font-size:8.19px;line-height:9px;color:#000;">PToF t step (s)</span>
<div style="left:658.5px;top:180px;width:54px;height:11.5px;border:1px solid #c4c4c4;border-top-color:#b4b4b4;border-radius:2px;background:#fff;box-sizing:border-box;border-color:#aaa #eee #eee #aaa;border-radius:0;"></div>
<span class="t" style="transform:translateX(0.00px) scaleX(0.9430);left:661.5px;top:181px;font-size:8.19px;line-height:9px;color:#8a8a8a;">4.0000e-05</span>
<span class="t" style="transform:translateX(0.00px) scaleX(1.0278);left:713.5px;top:182px;font-size:8.64px;line-height:10px;color:#000;">Max m/z</span>
<div style="left:750.3px;top:179.8px;width:26.7px;height:12px;border:1px solid #c4c4c4;border-top-color:#b4b4b4;border-radius:2px;background:#fff;box-sizing:border-box;border-color:#aaa #eee #eee #aaa;border-radius:0;"></div>
<span class="t" style="transform:translateX(0.00px) scaleX(0.9530);left:753.5px;top:183px;font-size:8.19px;line-height:9px;color:#8a8a8a;">442</span>
<span class="t" style="transform:translateX(0.00px) scaleX(1.0050);left:777.5px;top:181px;font-size:8.19px;line-height:9px;color:#000;">PToF duration (s)</span>
<div style="left:844.1px;top:178px;width:35.2px;height:13px;border:1px solid #c4c4c4;border-top-color:#b4b4b4;border-radius:2px;background:#fff;box-sizing:border-box;border-color:#aaa #eee #eee #aaa;border-radius:0;"></div>
<span class="t" style="transform:translateX(0.00px) scaleX(0.9600);left:847.5px;top:181px;font-size:8.19px;line-height:9px;color:#8a8a8a;">98.972</span>
<div style="left:888px;top:94.5px;width:300px;height:101px;border:1px solid #bdbdbd;box-sizing:border-box;box-shadow:inset 1px 1px 0 #fcfcfc, 1px 1px 0 #fcfcfc;"></div>
<span class="t" style="transform:translateX(0.00px) scaleX(0.9451);left:907.5px;top:84px;font-size:10.46px;line-height:11px;color:#000;">DC marker settings for single slit PToF</span>
<span class="t" style="transform:translateX(0.00px) scaleX(0.9230);left:892.5px;top:97px;font-size:10.46px;line-height:11px;color:#000;">Step 1. Select DC marker parameters for PToF</span>
<span class="t" style="transform:translateX(0.00px) scaleX(1.0200);left:893.5px;top:113px;font-size:8.19px;line-height:9px;color:#000;">PToF DC marker calculations can be redone through the Corrections section.</span>
<div style="left:894.8px;top:124px;width:12.8px;height:12.8px;border:1px solid #c0c0c0;border-radius:2px;background:#fff;box-sizing:border-box;"></div>
<span class="t" style="transform:translateX(0.00px) scaleX(1.0151);left:909.5px;top:127px;font-size:8.19px;line-height:9px;color:#000;">Use PToF bin # as units - if unchecked, µs units are used</span>
<div style="left:1127.5px;top:124.6px;width:58.5px;height:14px;border:1px solid #bdbdbd;border-radius:3px;background:linear-gradient(#fdfdfd,#f3f3f3 50%,#e9e9e9);box-sizing:border-box;"></div>
<span class="t" style="transform:translateX(0.00px) scaleX(0.9189);left:1133.75px;top:127px;font-size:8.83px;line-height:10px;color:#000;">Plot Regions</span>
<span class="t" style="transform:translateX(0.00px) scaleX(1.0025);left:894.5px;top:140px;font-size:8.19px;line-height:9px;color:#000;">Region 1 start</span>
<div style="left:949.5px;top:138.4px;width:24.5px;height:11.8px;border:1px solid #c4c4c4;border-top-color:#b4b4b4;border-radius:2px;background:#fff;box-sizing:border-box;"></div>
<span class="t" style="transform:translateX(0.00px) scaleX(0.9530);left:952.5px;top:140px;font-size:8.19px;line-height:9px;color:#000;">245</span>
<span class="t" style="transform:translateX(0.00px) scaleX(0.9926);left:979px;top:140px;font-size:8.19px;line-height:9px;color:#000;">Region 2 start</span>
<div style="left:1033.5px;top:138.4px;width:24.5px;height:11.8px;border:1px solid #c4c4c4;border-top-color:#b4b4b4;border-radius:2px;background:#fff;box-sizing:border-box;"></div>
<span class="t" style="transform:translateX(0.00px) scaleX(0.9897);left:1036px;top:140px;font-size:8.19px;line-height:9px;color:#000;">4645</span>
<span class="t" style="transform:translateX(0.00px) scaleX(1.0112);left:894.5px;top:154px;font-size:8.19px;line-height:9px;color:#000;">Region 1 stop</span>
<div style="left:949.5px;top:152.2px;width:24.5px;height:11.6px;border:1px solid #c4c4c4;border-top-color:#b4b4b4;border-radius:2px;background:#fff;box-sizing:border-box;"></div>
<span class="t" style="transform:translateX(0.00px) scaleX(0.9530);left:952.5px;top:154px;font-size:8.19px;line-height:9px;color:#000;">644</span>
<span class="t" style="transform:translateX(0.00px) scaleX(1.0112);left:978px;top:155px;font-size:8.19px;line-height:9px;color:#000;">Region 2 stop</span>
<div style="left:1033.5px;top:152.2px;width:24.5px;height:11.6px;border:1px solid #c4c4c4;border-top-color:#b4b4b4;border-radius:2px;background:#fff;box-sizing:border-box;"></div>
<span class="t" style="transform:translateX(0.00px) scaleX(0.9897);left:1036px;top:154px;font-size:8.19px;line-height:9px;color:#000;">5044</span>
<div style="left:1072.3px;top:141.8px;width:13px;height:13px;border:1px solid #c0c0c0;border-radius:2px;background:#fff;box-sizing:border-box;"></div>
<span class="t" style="transform:translateX(0.00px) scaleX(1.0165);left:1087px;top:144px;font-size:8.19px;line-height:9px;color:#000;">Use Region 1 only for all</span>
<span class="t" style="transform:translateX(0.00px) scaleX(1.0544);left:1087px;top:154px;font-size:8.19px;line-height:9px;color:#000;">m/zs not in Region 2 only.</span>
<span class="t" style="transform:translateX(0.00px) scaleX(1.0360);left:893.5px;top:172px;font-size:8.19px;line-height:9px;color:#000;">Region 1 only m/zs</span>
<div style="left:969.5px;top:169.3px;width:165px;height:11.7px;border:1px solid #c4c4c4;border-top-color:#b4b4b4;border-radius:2px;background:#fff;box-sizing:border-box;"></div>
<span class="t" style="transform:translateX(0.00px) scaleX(1.0360);left:893.5px;top:185px;font-size:8.19px;line-height:9px;color:#000;">Region 2 only m/zs</span>
<div style="left:969.5px;top:183.1px;width:165px;height:11.6px;border:1px solid #c4c4c4;border-top-color:#b4b4b4;border-radius:2px;background:#fff;box-sizing:border-box;"></div>
<span class="t" style="transform:translateX(0.00px) scaleX(0.9378);left:973px;top:185px;font-size:7.74px;line-height:9px;color:#000;">14,15,16,17,18,20,28,29,32,34,40,44,</span>
<div style="left:591px;top:203.3px;width:348px;height:17.4px;border:1px solid #d9a648;border-radius:3px;background:linear-gradient(#fddb9a,#fcc458 45%,#f9b840);box-sizing:border-box;"></div>
<span class="t" style="transform:translateX(0.00px) scaleX(0.9595);left:601px;top:207px;font-size:10.46px;line-height:11px;color:#000;">Step 2. Calculate or recalculate all m/z for run or todo with Step 1. settings</span>
<div style="left:947.7px;top:203.5px;width:41.5px;height:14.5px;border:1px solid #c4c4c4;border-top-color:#b4b4b4;border-radius:2px;background:#fff;box-sizing:border-box;"></div>
<div style="left:977.2px;top:204.5px;width:1px;height:12.5px;background:#d0d0d0;"></div>
<svg style="left:977.2px;top:203.5px" width="12" height="14.5"><path d="M3.1 5.95 L6.3 2.25 L9.5 5.95Z M3.1 8.55 L6.3 12.25 L9.5 8.55Z" fill="#4c4c4c"/></svg>
<div style="left:998.6px;top:203.5px;width:41.5px;height:14.5px;border:1px solid #c4c4c4;border-top-color:#b4b4b4;border-radius:2px;background:#fff;box-sizing:border-box;"></div>
<div style="left:1028.1px;top:204.5px;width:1px;height:12.5px;background:#d0d0d0;"></div>
<svg style="left:1028.1px;top:203.5px" width="12" height="14.5"><path d="M3.1 5.95 L6.3 2.25 L9.5 5.95Z M3.1 8.55 L6.3 12.25 L9.5 8.55Z" fill="#4c4c4c"/></svg>
<div style="left:1087.7px;top:203.5px;width:41.5px;height:14.5px;border:1px solid #c4c4c4;border-top-color:#b4b4b4;border-radius:2px;background:#fff;box-sizing:border-box;"></div>
<div style="left:1117.2px;top:204.5px;width:1px;height:12.5px;background:#d0d0d0;"></div>
<svg style="left:1117.2px;top:203.5px" width="12" height="14.5"><path d="M3.1 5.95 L6.3 2.25 L9.5 5.95Z M3.1 8.55 L6.3 12.25 L9.5 8.55Z" fill="#4c4c4c"/></svg>
<div style="left:972.4px;top:201px;width:159.3px;height:19.4px;border:1px solid #a9cdf0;background:rgba(190,220,250,0.33);box-sizing:border-box;border-radius:2px;"></div>
<div style="left:1049px;top:202px;width:13px;height:13px;background:#f3f5f7;"></div>
<span class="t" style="transform:translateX(0.00px) scaleX(0.9091);left:952px;top:206px;font-size:10.01px;line-height:11px;color:#000;">&lt;no v</span>
<span class="t" style="transform:translateX(0.00px) scaleX(0.9389);left:991px;top:206px;font-size:10.46px;line-height:11px;color:#1c2a40;font-weight:bold;">p</span>
<span class="t" style="transform:translateX(0.00px) scaleX(0.9091);left:1002.5px;top:206px;font-size:10.01px;line-height:11px;color:#000;">&lt;no v</span>
<span class="t" style="transform:translateX(0.00px) scaleX(1.0123);left:1041px;top:207px;font-size:10.01px;line-height:11px;color:#1c2a40;font-weight:bold;">/ t</span>
<span class="t" style="transform:translateX(0.00px) scaleX(0.7742);left:1063px;top:205px;font-size:9.1px;line-height:10px;color:#b4bcc6;">No</span>
<span class="t" style="transform:translateX(0.00px) scaleX(1.0609);left:1066px;top:206px;font-size:10.46px;line-height:11px;color:#1c2a40;font-weight:bold;">m/z</span>
<span class="t" style="transform:translateX(0.00px) scaleX(1.0309);left:1091.5px;top:206px;font-size:10.46px;line-height:11px;color:#000;">43</span>
<svg style="left:591px;top:224px" width="599" height="236" viewBox="591 224 599 236" font-family="Liberation Sans, sans-serif"><rect x="592" y="224.7" width="597.4" height="235.3" fill="#fff"/><rect x="741.8" y="235.4" width="44.9" height="185.1" fill="#f2f2ba"/><path d="M741.8 236.2 H786.7" stroke="#dede48" stroke-width="1.6" stroke-dasharray="3.2 0.5"/><path d="M647 421.3 H1187.5" stroke="#787878" stroke-width="1.3" stroke-dasharray="1.4 2.7"/><path d="M728.8 236 V419.5 M811 236 V419.5 M1036.4 236 V419.5" stroke="#2c2c2c" stroke-width="2"/><path d="M646.7 235.5 V424 M646.2 423.7 H1188 M1187.4 235.5 V424 M650.20 423.7 V430.2 M660.45 423.7 V426.7 M670.69 423.7 V426.7 M680.94 423.7 V426.7 M691.18 423.7 V426.7 M701.43 423.7 V430.2 M711.67 423.7 V426.7 M721.92 423.7 V426.7 M732.16 423.7 V426.7 M742.41 423.7 V426.7 M752.65 423.7 V430.2 M762.89 423.7 V426.7 M773.14 423.7 V426.7 M783.38 423.7 V426.7 M793.63 423.7 V426.7 M803.88 423.7 V430.2 M814.12 423.7 V426.7 M824.37 423.7 V426.7 M834.61 423.7 V426.7 M844.86 423.7 V426.7 M855.10 423.7 V430.2 M865.35 423.7 V426.7 M875.59 423.7 V426.7 M885.84 423.7 V426.7 M896.08 423.7 V426.7 M906.33 423.7 V430.2 M916.57 423.7 V426.7 M926.82 423.7 V426.7 M937.06 423.7 V426.7 M947.31 423.7 V426.7 M957.55 423.7 V430.2 M967.80 423.7 V426.7 M978.04 423.7 V426.7 M988.29 423.7 V426.7 M998.53 423.7 V426.7 M1008.78 423.7 V430.2 M1019.02 423.7 V426.7 M1029.27 423.7 V426.7 M1039.51 423.7 V426.7 M1049.76 423.7 V426.7 M1060.00 423.7 V430.2 M1070.25 423.7 V426.7 M1080.49 423.7 V426.7 M1090.74 423.7 V426.7 M1100.98 423.7 V426.7 M1111.22 423.7 V430.2 M1121.47 423.7 V426.7 M1131.72 423.7 V426.7 M1141.96 423.7 V426.7 M1152.20 423.7 V426.7 M1162.45 423.7 V430.2 M1172.70 423.7 V426.7 M641.2 403.40 H646.7 M641.2 375.30 H646.7 M641.2 347.20 H646.7 M641.2 319.10 H646.7 M641.2 291.00 H646.7 M641.2 262.90 H646.7" stroke="#000" stroke-width="1" fill="none"/><path d="M654.90 421.00 L659.00 416.40 L663.11 402.60 L667.22 411.00 L671.32 406.00 L675.42 397.60 L679.53 412.00 L683.63 411.60 L687.74 409.00 L691.85 410.60 L695.95 410.60 L700.05 400.00 L704.16 402.60 L708.26 414.60 L712.37 409.00 L716.48 410.40 L720.58 418.00 L724.68 412.60 L728.79 407.60 L732.89 406.60 L737.00 412.00 L741.11 415.00 L745.21 409.00 L749.31 413.60 L753.42 412.00 L757.52 410.00 L761.63 410.60 L765.74 406.00 L769.84 408.60 L773.94 411.00 L778.05 418.00 L782.15 416.00 L786.26 406.00 L790.37 406.00 L794.47 406.00 L798.58 401.60 L802.68 406.00 L806.78 400.60 L810.89 404.60 L815.00 400.00 L819.10 401.00 L823.20 403.00 L827.31 410.00 L831.41 398.00 L835.52 398.00 L839.62 403.00 L843.73 401.00 L847.84 394.60 L851.94 390.00 L856.04 384.60 L860.15 376.00 L864.25 371.00 L868.36 365.00 L872.47 355.00 L876.57 351.60 L880.67 338.40 L884.78 327.00 L888.88 317.00 L892.99 320.00 L897.10 302.60 L901.20 293.00 L905.31 285.00 L909.41 271.00 L913.51 263.60 L917.62 263.00 L921.73 248.00 L925.83 245.60 L929.93 249.00 L934.04 253.00 L938.14 236.00 L942.25 238.40 L946.36 258.00 L950.46 270.00 L954.57 265.00 L958.67 276.00 L962.78 282.00 L966.88 294.40 L970.99 298.00 L975.09 304.00 L979.19 321.00 L983.30 312.40 L987.40 330.00 L991.51 323.60 L995.62 316.60 L999.72 344.00 L1003.83 341.60 L1007.93 329.60 L1012.04 341.60 L1016.14 341.00 L1020.25 352.60 L1024.35 361.60 L1028.45 360.60 L1032.56 360.00 L1036.66 355.60 L1040.77 373.60 L1044.88 375.00 L1048.98 365.60 L1053.09 380.00 L1057.19 381.00 L1061.30 383.00 L1065.40 384.60 L1069.51 375.60 L1073.61 379.60 L1077.72 373.40 L1081.82 380.00 L1085.92 373.40 L1090.03 394.60 L1094.13 391.00 L1098.24 388.00 L1102.35 383.40 L1106.45 390.00 L1110.56 395.00 L1114.66 398.60 L1118.77 391.60 L1122.87 391.60 L1126.97 388.00 L1131.08 394.60 L1135.18 398.60 L1139.29 397.40 L1143.39 401.60 L1147.50 398.40 L1151.61 397.40 L1155.71 396.00 L1159.82 406.60 L1163.92 402.60 L1168.03 392.00 L1172.13 402.00 L1176.24 401.40 L1180.34 403.00 L1184.45 404.60" stroke="#d9531e" stroke-width="1" fill="none"/><circle cx="654.90" cy="421.00" r="2.6" fill="none" stroke="#d9531e" stroke-width="1"/><circle cx="659.00" cy="416.40" r="2.6" fill="none" stroke="#d9531e" stroke-width="1"/><circle cx="663.11" cy="402.60" r="2.6" fill="none" stroke="#d9531e" stroke-width="1"/><circle cx="667.22" cy="411.00" r="2.6" fill="none" stroke="#d9531e" stroke-width="1"/><circle cx="671.32" cy="406.00" r="2.6" fill="none" stroke="#d9531e" stroke-width="1"/><circle cx="675.42" cy="397.60" r="2.6" fill="none" stroke="#d9531e" stroke-width="1"/><circle cx="679.53" cy="412.00" r="2.6" fill="none" stroke="#d9531e" stroke-width="1"/><circle cx="683.63" cy="411.60" r="2.6" fill="none" stroke="#d9531e" stroke-width="1"/><circle cx="687.74" cy="409.00" r="2.6" fill="none" stroke="#d9531e" stroke-width="1"/><circle cx="691.85" cy="410.60" r="2.6" fill="none" stroke="#d9531e" stroke-width="1"/><circle cx="695.95" cy="410.60" r="2.6" fill="none" stroke="#d9531e" stroke-width="1"/><circle cx="700.05" cy="400.00" r="2.6" fill="none" stroke="#d9531e" stroke-width="1"/><circle cx="704.16" cy="402.60" r="2.6" fill="none" stroke="#d9531e" stroke-width="1"/><circle cx="708.26" cy="414.60" r="2.6" fill="none" stroke="#d9531e" stroke-width="1"/><circle cx="712.37" cy="409.00" r="2.6" fill="none" stroke="#d9531e" stroke-width="1"/><circle cx="716.48" cy="410.40" r="2.6" fill="none" stroke="#d9531e" stroke-width="1"/><circle cx="720.58" cy="418.00" r="2.6" fill="none" stroke="#d9531e" stroke-width="1"/><circle cx="724.68" cy="412.60" r="2.6" fill="none" stroke="#d9531e" stroke-width="1"/><circle cx="728.79" cy="407.60" r="2.6" fill="none" stroke="#d9531e" stroke-width="1"/><circle cx="732.89" cy="406.60" r="2.6" fill="none" stroke="#d9531e" stroke-width="1"/><circle cx="737.00" cy="412.00" r="2.6" fill="none" stroke="#d9531e" stroke-width="1"/><circle cx="741.11" cy="415.00" r="2.6" fill="none" stroke="#d9531e" stroke-width="1"/><circle cx="745.21" cy="409.00" r="2.6" fill="none" stroke="#d9531e" stroke-width="1"/><circle cx="749.31" cy="413.60" r="2.6" fill="none" stroke="#d9531e" stroke-width="1"/><circle cx="753.42" cy="412.00" r="2.6" fill="none" stroke="#d9531e" stroke-width="1"/><circle cx="757.52" cy="410.00" r="2.6" fill="none" stroke="#d9531e" stroke-width="1"/><circle cx="761.63" cy="410.60" r="2.6" fill="none" stroke="#d9531e" stroke-width="1"/><circle cx="765.74" cy="406.00" r="2.6" fill="none" stroke="#d9531e" stroke-width="1"/><circle cx="769.84" cy="408.60" r="2.6" fill="none" stroke="#d9531e" stroke-width="1"/><circle cx="773.94" cy="411.00" r="2.6" fill="none" stroke="#d9531e" stroke-width="1"/><circle cx="778.05" cy="418.00" r="2.6" fill="none" stroke="#d9531e" stroke-width="1"/><circle cx="782.15" cy="416.00" r="2.6" fill="none" stroke="#d9531e" stroke-width="1"/><circle cx="786.26" cy="406.00" r="2.6" fill="none" stroke="#d9531e" stroke-width="1"/><circle cx="790.37" cy="406.00" r="2.6" fill="none" stroke="#d9531e" stroke-width="1"/><circle cx="794.47" cy="406.00" r="2.6" fill="none" stroke="#d9531e" stroke-width="1"/><circle cx="798.58" cy="401.60" r="2.6" fill="none" stroke="#d9531e" stroke-width="1"/><circle cx="802.68" cy="406.00" r="2.6" fill="none" stroke="#d9531e" stroke-width="1"/><circle cx="806.78" cy="400.60" r="2.6" fill="none" stroke="#d9531e" stroke-width="1"/><circle cx="810.89" cy="404.60" r="2.6" fill="none" stroke="#d9531e" stroke-width="1"/><circle cx="815.00" cy="400.00" r="2.6" fill="none" stroke="#d9531e" stroke-width="1"/><circle cx="819.10" cy="401.00" r="2.6" fill="none" stroke="#d9531e" stroke-width="1"/><circle cx="823.20" cy="403.00" r="2.6" fill="none" stroke="#d9531e" stroke-width="1"/><circle cx="827.31" cy="410.00" r="2.6" fill="none" stroke="#d9531e" stroke-width="1"/><circle cx="831.41" cy="398.00" r="2.6" fill="none" stroke="#d9531e" stroke-width="1"/><circle cx="835.52" cy="398.00" r="2.6" fill="none" stroke="#d9531e" stroke-width="1"/><circle cx="839.62" cy="403.00" r="2.6" fill="none" stroke="#d9531e" stroke-width="1"/><circle cx="843.73" cy="401.00" r="2.6" fill="none" stroke="#d9531e" stroke-width="1"/><circle cx="847.84" cy="394.60" r="2.6" fill="none" stroke="#d9531e" stroke-width="1"/><circle cx="851.94" cy="390.00" r="2.6" fill="none" stroke="#d9531e" stroke-width="1"/><circle cx="856.04" cy="384.60" r="2.6" fill="none" stroke="#d9531e" stroke-width="1"/><circle cx="860.15" cy="376.00" r="2.6" fill="none" stroke="#d9531e" stroke-width="1"/><circle cx="864.25" cy="371.00" r="2.6" fill="none" stroke="#d9531e" stroke-width="1"/><circle cx="868.36" cy="365.00" r="2.6" fill="none" stroke="#d9531e" stroke-width="1"/><circle cx="872.47" cy="355.00" r="2.6" fill="none" stroke="#d9531e" stroke-width="1"/><circle cx="876.57" cy="351.60" r="2.6" fill="none" stroke="#d9531e" stroke-width="1"/><circle cx="880.67" cy="338.40" r="2.6" fill="none" stroke="#d9531e" stroke-width="1"/><circle cx="884.78" cy="327.00" r="2.6" fill="none" stroke="#d9531e" stroke-width="1"/><circle cx="888.88" cy="317.00" r="2.6" fill="none" stroke="#d9531e" stroke-width="1"/><circle cx="892.99" cy="320.00" r="2.6" fill="none" stroke="#d9531e" stroke-width="1"/><circle cx="897.10" cy="302.60" r="2.6" fill="none" stroke="#d9531e" stroke-width="1"/><circle cx="901.20" cy="293.00" r="2.6" fill="none" stroke="#d9531e" stroke-width="1"/><circle cx="905.31" cy="285.00" r="2.6" fill="none" stroke="#d9531e" stroke-width="1"/><circle cx="909.41" cy="271.00" r="2.6" fill="none" stroke="#d9531e" stroke-width="1"/><circle cx="913.51" cy="263.60" r="2.6" fill="none" stroke="#d9531e" stroke-width="1"/><circle cx="917.62" cy="263.00" r="2.6" fill="none" stroke="#d9531e" stroke-width="1"/><circle cx="921.73" cy="248.00" r="2.6" fill="none" stroke="#d9531e" stroke-width="1"/><circle cx="925.83" cy="245.60" r="2.6" fill="none" stroke="#d9531e" stroke-width="1"/><circle cx="929.93" cy="249.00" r="2.6" fill="none" stroke="#d9531e" stroke-width="1"/><circle cx="934.04" cy="253.00" r="2.6" fill="none" stroke="#d9531e" stroke-width="1"/><circle cx="938.14" cy="236.00" r="2.6" fill="none" stroke="#d9531e" stroke-width="1"/><circle cx="942.25" cy="238.40" r="2.6" fill="none" stroke="#d9531e" stroke-width="1"/><circle cx="946.36" cy="258.00" r="2.6" fill="none" stroke="#d9531e" stroke-width="1"/><circle cx="950.46" cy="270.00" r="2.6" fill="none" stroke="#d9531e" stroke-width="1"/><circle cx="954.57" cy="265.00" r="2.6" fill="none" stroke="#d9531e" stroke-width="1"/><circle cx="958.67" cy="276.00" r="2.6" fill="none" stroke="#d9531e" stroke-width="1"/><circle cx="962.78" cy="282.00" r="2.6" fill="none" stroke="#d9531e" stroke-width="1"/><circle cx="966.88" cy="294.40" r="2.6" fill="none" stroke="#d9531e" stroke-width="1"/><circle cx="970.99" cy="298.00" r="2.6" fill="none" stroke="#d9531e" stroke-width="1"/><circle cx="975.09" cy="304.00" r="2.6" fill="none" stroke="#d9531e" stroke-width="1"/><circle cx="979.19" cy="321.00" r="2.6" fill="none" stroke="#d9531e" stroke-width="1"/><circle cx="983.30" cy="312.40" r="2.6" fill="none" stroke="#d9531e" stroke-width="1"/><circle cx="987.40" cy="330.00" r="2.6" fill="none" stroke="#d9531e" stroke-width="1"/><circle cx="991.51" cy="323.60" r="2.6" fill="none" stroke="#d9531e" stroke-width="1"/><circle cx="995.62" cy="316.60" r="2.6" fill="none" stroke="#d9531e" stroke-width="1"/><circle cx="999.72" cy="344.00" r="2.6" fill="none" stroke="#d9531e" stroke-width="1"/><circle cx="1003.83" cy="341.60" r="2.6" fill="none" stroke="#d9531e" stroke-width="1"/><circle cx="1007.93" cy="329.60" r="2.6" fill="none" stroke="#d9531e" stroke-width="1"/><circle cx="1012.04" cy="341.60" r="2.6" fill="none" stroke="#d9531e" stroke-width="1"/><circle cx="1016.14" cy="341.00" r="2.6" fill="none" stroke="#d9531e" stroke-width="1"/><circle cx="1020.25" cy="352.60" r="2.6" fill="none" stroke="#d9531e" stroke-width="1"/><circle cx="1024.35" cy="361.60" r="2.6" fill="none" stroke="#d9531e" stroke-width="1"/><circle cx="1028.45" cy="360.60" r="2.6" fill="none" stroke="#d9531e" stroke-width="1"/><circle cx="1032.56" cy="360.00" r="2.6" fill="none" stroke="#d9531e" stroke-width="1"/><circle cx="1036.66" cy="355.60" r="2.6" fill="none" stroke="#d9531e" stroke-width="1"/><circle cx="1040.77" cy="373.60" r="2.6" fill="none" stroke="#d9531e" stroke-width="1"/><circle cx="1044.88" cy="375.00" r="2.6" fill="none" stroke="#d9531e" stroke-width="1"/><circle cx="1048.98" cy="365.60" r="2.6" fill="none" stroke="#d9531e" stroke-width="1"/><circle cx="1053.09" cy="380.00" r="2.6" fill="none" stroke="#d9531e" stroke-width="1"/><circle cx="1057.19" cy="381.00" r="2.6" fill="none" stroke="#d9531e" stroke-width="1"/><circle cx="1061.30" cy="383.00" r="2.6" fill="none" stroke="#d9531e" stroke-width="1"/><circle cx="1065.40" cy="384.60" r="2.6" fill="none" stroke="#d9531e" stroke-width="1"/><circle cx="1069.51" cy="375.60" r="2.6" fill="none" stroke="#d9531e" stroke-width="1"/><circle cx="1073.61" cy="379.60" r="2.6" fill="none" stroke="#d9531e" stroke-width="1"/><circle cx="1077.72" cy="373.40" r="2.6" fill="none" stroke="#d9531e" stroke-width="1"/><circle cx="1081.82" cy="380.00" r="2.6" fill="none" stroke="#d9531e" stroke-width="1"/><circle cx="1085.92" cy="373.40" r="2.6" fill="none" stroke="#d9531e" stroke-width="1"/><circle cx="1090.03" cy="394.60" r="2.6" fill="none" stroke="#d9531e" stroke-width="1"/><circle cx="1094.13" cy="391.00" r="2.6" fill="none" stroke="#d9531e" stroke-width="1"/><circle cx="1098.24" cy="388.00" r="2.6" fill="none" stroke="#d9531e" stroke-width="1"/><circle cx="1102.35" cy="383.40" r="2.6" fill="none" stroke="#d9531e" stroke-width="1"/><circle cx="1106.45" cy="390.00" r="2.6" fill="none" stroke="#d9531e" stroke-width="1"/><circle cx="1110.56" cy="395.00" r="2.6" fill="none" stroke="#d9531e" stroke-width="1"/><circle cx="1114.66" cy="398.60" r="2.6" fill="none" stroke="#d9531e" stroke-width="1"/><circle cx="1118.77" cy="391.60" r="2.6" fill="none" stroke="#d9531e" stroke-width="1"/><circle cx="1122.87" cy="391.60" r="2.6" fill="none" stroke="#d9531e" stroke-width="1"/><circle cx="1126.97" cy="388.00" r="2.6" fill="none" stroke="#d9531e" stroke-width="1"/><circle cx="1131.08" cy="394.60" r="2.6" fill="none" stroke="#d9531e" stroke-width="1"/><circle cx="1135.18" cy="398.60" r="2.6" fill="none" stroke="#d9531e" stroke-width="1"/><circle cx="1139.29" cy="397.40" r="2.6" fill="none" stroke="#d9531e" stroke-width="1"/><circle cx="1143.39" cy="401.60" r="2.6" fill="none" stroke="#d9531e" stroke-width="1"/><circle cx="1147.50" cy="398.40" r="2.6" fill="none" stroke="#d9531e" stroke-width="1"/><circle cx="1151.61" cy="397.40" r="2.6" fill="none" stroke="#d9531e" stroke-width="1"/><circle cx="1155.71" cy="396.00" r="2.6" fill="none" stroke="#d9531e" stroke-width="1"/><circle cx="1159.82" cy="406.60" r="2.6" fill="none" stroke="#d9531e" stroke-width="1"/><circle cx="1163.92" cy="402.60" r="2.6" fill="none" stroke="#d9531e" stroke-width="1"/><circle cx="1168.03" cy="392.00" r="2.6" fill="none" stroke="#d9531e" stroke-width="1"/><circle cx="1172.13" cy="402.00" r="2.6" fill="none" stroke="#d9531e" stroke-width="1"/><circle cx="1176.24" cy="401.40" r="2.6" fill="none" stroke="#d9531e" stroke-width="1"/><circle cx="1180.34" cy="403.00" r="2.6" fill="none" stroke="#d9531e" stroke-width="1"/><circle cx="1184.45" cy="404.60" r="2.6" fill="none" stroke="#d9531e" stroke-width="1"/><text x="637.6" y="406.60" font-size="9" text-anchor="end">100</text><text x="637.6" y="378.50" font-size="9" text-anchor="end">120</text><text x="637.6" y="350.40" font-size="9" text-anchor="end">140</text><text x="637.6" y="322.30" font-size="9" text-anchor="end">160</text><text x="637.6" y="294.20" font-size="9" text-anchor="end">180</text><text x="637.6" y="266.10" font-size="9" text-anchor="end">200</text><text x="650.20" y="441.2" font-size="9" text-anchor="middle">0</text><text x="701.43" y="441.2" font-size="9" text-anchor="middle">500</text><text x="752.65" y="441.2" font-size="9" text-anchor="middle">1000</text><text x="803.88" y="441.2" font-size="9" text-anchor="middle">1500</text><text x="855.10" y="441.2" font-size="9" text-anchor="middle">2000</text><text x="906.33" y="441.2" font-size="9" text-anchor="middle">2500</text><text x="957.55" y="441.2" font-size="9" text-anchor="middle">3000</text><text x="1008.78" y="441.2" font-size="9" text-anchor="middle">3500</text><text x="1060.00" y="441.2" font-size="9" text-anchor="middle">4000</text><text x="1111.22" y="441.2" font-size="9" text-anchor="middle">4500</text><text x="1162.45" y="441.2" font-size="9" text-anchor="middle">5000</text><text x="918" y="454.5" font-size="9" text-anchor="middle" textLength="85">PToF bins in time, µs</text><text transform="translate(600 380.7) rotate(-90)" font-size="8.3" textLength="107" lengthAdjust="spacingAndGlyphs">PToF sticks, dS/dPToF (Hz)</text><text transform="translate(611.3 361) rotate(-90)" font-size="8.3" textLength="67" lengthAdjust="spacingAndGlyphs">Chopper ignored</text><rect x="1071.9" y="236.2" width="107.3" height="26" fill="#fff" stroke="#222" stroke-width="0.9"/><path d="M1083.1 241 V246" stroke="#000" stroke-width="1.8"/><rect x="1080.5" y="252.7" width="7" height="5.5" rx="1" fill="#f2f2b0" stroke="#dcdc48" stroke-width="1"/><text x="1095" y="247" font-size="9" textLength="68" fill="#222">10, 100, 1000nm</text><text x="1095" y="258" font-size="9" textLength="81" fill="#222">PToF_DCgr_regionY</text></svg>
<div style="left:585px;top:460px;width:490px;height:42.5px;background:#f0f0f0;border-top:1px solid #747474;box-sizing:border-box;"></div>
<svg style="left:589px;top:475.95px" width="12" height="12" viewBox="-6 -6 12 12"><g stroke="#4a8fd6" stroke-width="1.7"><path d="M0 -5.5 V5.5 M-5.5 0 H5.5 M-3.9 -3.9 L3.9 3.9 M-3.9 3.9 L3.9 -3.9"/></g><circle r="3.2" fill="#4a8fd6"/><circle r="1.6" fill="#f0f0f0"/></svg>
<div style="left:606px;top:461px;width:1px;height:41.5px;background:#b4b4b4;"></div>
<svg style="left:611.5px;top:465px" width="14" height="14"><rect width="14" height="14" fill="#fafafa"/><circle cx="7" cy="7" r="5.2" fill="none" stroke="#111" stroke-width="1"/><path d="M7 1.8 V12.2 M1.8 7 H12.2" stroke="#111" stroke-width="0.9"/></svg>
<svg style="left:611.5px;top:485.5px" width="14" height="14"><rect width="14" height="14" fill="#fafafa"/><rect x="2" y="2" width="10" height="10" fill="none" stroke="#111" stroke-width="1"/><path d="M2 2 L12 12 M12 2 L2 12" stroke="#111" stroke-width="0.9"/></svg>
<span class="t" style="transform:translateX(0.00px) scaleX(1.0718);left:628px;top:467px;font-size:10.37px;line-height:11px;color:#000;-webkit-text-stroke:0.18px #000;">A:</span>
<span class="t" style="transform:translateX(0.00px) scaleX(1.0718);left:628.5px;top:488px;font-size:10.37px;line-height:11px;color:#000;-webkit-text-stroke:0.18px #000;">B:</span>
<div style="left:667px;top:464.7px;width:33.5px;height:33px;background:linear-gradient(#8c8c8c,#c4c4c4 25%,#f8f8f8 50%,#c4c4c4 75%,#8c8c8c);box-shadow:1px 1px 0 #fafafa;"></div>
<div style="left:681.3px;top:475.3px;width:5px;height:12px;background:#a4a4a4;border-radius:2.5px;"></div>
<span class="t" style="transform:translateX(0.00px) scaleX(1.0995);left:707.5px;top:467px;font-size:10.37px;line-height:11px;color:#000;-webkit-text-stroke:0.15px #000;">pnt:</span>
<span class="t" style="transform:translateX(0.00px) scaleX(1.0995);left:707.5px;top:488px;font-size:10.37px;line-height:11px;color:#000;-webkit-text-stroke:0.15px #000;">pnt:</span>
<div style="left:727.8px;top:462px;width:91px;height:18px;border:1px solid #c4c4c4;border-top-color:#b4b4b4;border-radius:2px;background:#fff;box-sizing:border-box;"></div>
<div style="left:727.8px;top:483px;width:91px;height:18px;border:1px solid #c4c4c4;border-top-color:#b4b4b4;border-radius:2px;background:#fff;box-sizing:border-box;"></div>
<span class="t" style="transform:translateX(0.00px) scaleX(1.0207);left:820.5px;top:467px;font-size:10.37px;line-height:11px;color:#000;-webkit-text-stroke:0.18px #000;">X:</span>
<span class="t" style="transform:translateX(0.00px) scaleX(1.0305);left:900.5px;top:467px;font-size:10.37px;line-height:11px;color:#000;-webkit-text-stroke:0.18px #000;">Y:</span>
<span class="t" style="transform:translateX(0.00px) scaleX(1.0207);left:820.5px;top:488px;font-size:10.37px;line-height:11px;color:#000;-webkit-text-stroke:0.18px #000;">X:</span>
<span class="t" style="transform:translateX(0.00px) scaleX(1.0305);left:900.5px;top:488px;font-size:10.37px;line-height:11px;color:#000;-webkit-text-stroke:0.18px #000;">Y:</span>
<div style="left:982px;top:461px;width:1px;height:41.5px;background:#d0d0d0;"></div>
<div style="left:983px;top:461px;width:1px;height:41.5px;background:#fff;"></div>
<span class="t" style="transform:translateX(0.00px) scaleX(0.9913);left:986.5px;top:468px;font-size:10.37px;line-height:11px;color:#000;-webkit-text-stroke:0.18px #000;">ΔY:</span>
<span class="t" style="transform:translateX(0.00px) scaleX(0.9570);left:986.5px;top:488px;font-size:10.37px;line-height:11px;color:#000;-webkit-text-stroke:0.18px #000;">ΔX:</span>
<div style="left:1075px;top:460px;width:125px;height:46px;background:#a0a0a0;"></div>
<div style="left:584px;top:502.5px;width:70px;height:4px;background:#e6e6e6;"></div>
<div style="left:653.5px;top:502.5px;width:546.5px;height:4px;background:#a0a0a0;"></div>
<div style="left:625px;top:503.5px;width:27px;height:3px;background:#fafafa;border-left:1px solid #c8c8c8;box-sizing:border-box;"></div>
<div style="left:585px;top:460px;width:1px;height:6.3px;background:#808080;"></div>
</body></html>
